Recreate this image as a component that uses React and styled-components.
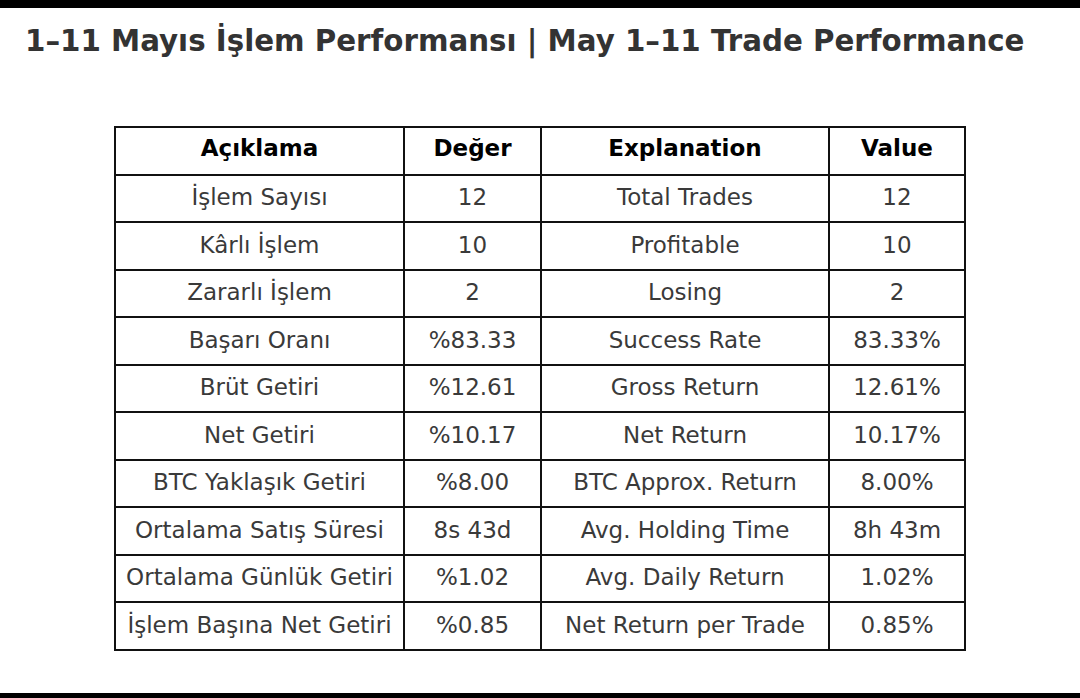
import React from 'react'
import styled, {createGlobalStyle} from 'styled-components'

const GlobalStyle = createGlobalStyle`
  html, body {
    margin: 0;
    padding: 0;
    background: #fff;
  }
  body {
    font-family: "DejaVu Sans", "Liberation Sans", sans-serif;
  }
`

const Page = styled.div`
  width: 1080px;
  height: 698px;
  display: flex;
  flex-direction: column;
  overflow: hidden;
  background: #fff;
`

const Bar = styled.div`
  height: ${p => p.h}px;
  background: #000;
  flex-shrink: 0;
`

const Title = styled.h1`
  margin: 0;
  padding: 16px 0 0 25px;
  height: 62px;
  box-sizing: border-box;
  font-size: 29.3px;
  font-weight: bold;
  color: #333;
  white-space: nowrap;
`

const TableWrap = styled.div`
  flex: 1;
  display: flex;
  justify-content: center;
  padding-top: 56px;
`

const Table = styled.table`
  border-collapse: collapse;
  table-layout: fixed;
  width: 851px;
  align-self: flex-start;
`

const Row = styled.tr`
  height: 47.5px;
`

const Cell = styled.td`
  border: 2px solid #111;
  text-align: center;
  vertical-align: middle;
  padding: 0 0 ${p => (p.head ? 5 : 2)}px;
  font-size: 23px;
  color: ${p => (p.head ? '#000' : '#3a3a3a')};
  font-weight: ${p => (p.head ? 'bold' : 'normal')};
  white-space: nowrap;
  overflow: hidden;
`

const rows = [
  ['İşlem Sayısı', '12', 'Total Trades', '12'],
  ['Kârlı İşlem', '10', 'Profitable', '10'],
  ['Zararlı İşlem', '2', 'Losing', '2'],
  ['Başarı Oranı', '%83.33', 'Success Rate', '83.33%'],
  ['Brüt Getiri', '%12.61', 'Gross Return', '12.61%'],
  ['Net Getiri', '%10.17', 'Net Return', '10.17%'],
  ['BTC Yaklaşık Getiri', '%8.00', 'BTC Approx. Return', '8.00%'],
  ['Ortalama Satış Süresi', '8s 43d', 'Avg. Holding Time', '8h 43m'],
  ['Ortalama Günlük Getiri', '%1.02', 'Avg. Daily Return', '1.02%'],
  ['İşlem Başına Net Getiri', '%0.85', 'Net Return per Trade', '0.85%'],
]

const widths = [289, 137, 288, 136]

function App() {
  return (
    <Page>
      <GlobalStyle />
      <Bar h={8} />
      <Title>1–11 Mayıs İşlem Performansı | May 1–11 Trade Performance</Title>
      <TableWrap>
        <Table>
          <colgroup>
            {widths.map((w, i) => <col key={i} style={{width: w}} />)}
          </colgroup>
          <tbody>
            <Row>
              {['Açıklama', 'Değer', 'Explanation', 'Value'].map(h =>
                <Cell as="th" head key={h}>{h}</Cell>
              )}
            </Row>
            {rows.map((r, i) =>
              <Row key={i}>
                {r.map((c, j) => <Cell key={j}>{c}</Cell>)}
              </Row>
            )}
          </tbody>
        </Table>
      </TableWrap>
      <Bar h={5} />
    </Page>
  )
}

export default App
